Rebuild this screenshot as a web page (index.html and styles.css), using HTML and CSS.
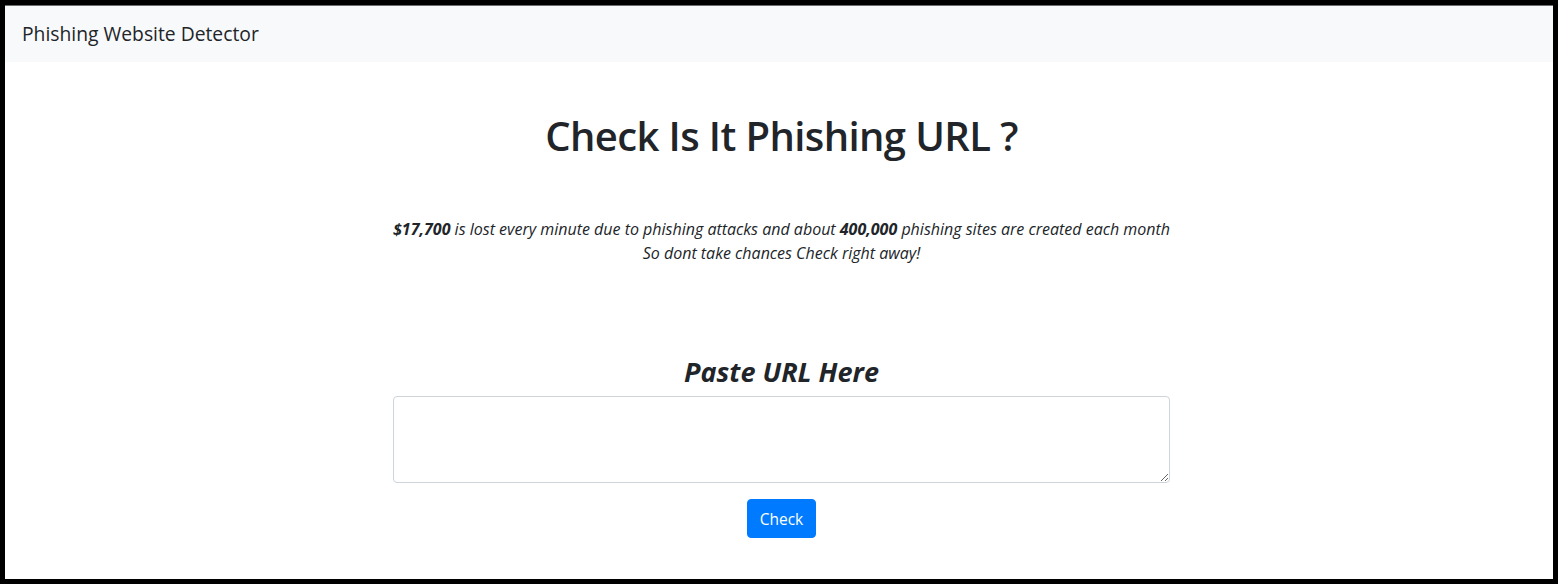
FILE: index.html
```html
<!DOCTYPE html>
<html lang="en">
<head>
<meta charset="utf-8">
<title>Phishing Website Detector</title>
<link rel="stylesheet" href="styles.css">
</head>
<body>
<div class="frame">
  <nav class="navbar">
    <span class="brand">Phishing Website Detector</span>
  </nav>
  <main class="main">
    <h1 class="title">Check Is It Phishing URL ?</h1>
    <p class="lead"><b>$17,700</b> is lost every minute due to phishing attacks and about <b>400,000</b> phishing sites are created each month<br>So dont take chances Check right away!</p>
    <form class="form">
      <h3 class="label">Paste URL Here</h3>
      <textarea class="url"></textarea>
      <button type="button" class="btn">Check</button>
    </form>
  </main>
</div>
</body>
</html>
```
FILE: styles.css
```css
html, body {
  margin: 0;
  padding: 0;
  height: 100%;
}
body {
  font-family: "Open Sans", "Noto Sans", sans-serif;
  color: #212529;
  background: #fff;
}
.frame {
  box-sizing: border-box;
  height: 100%;
  border: 5px solid #000;
  overflow: hidden;
  background: #fff;
}
.navbar {
  box-sizing: border-box;
  height: 57px;
  background: #f8f9fa;
  border-top: 1px solid #6c6c6c;
  padding: 0 17px;
  display: flex;
  align-items: center;
}
.brand {
  font-size: 19.3px;
  line-height: 30px;
  color: #212529;
}
.main {
  display: flex;
  flex-direction: column;
  align-items: center;
  padding-left: 5px;
}
.title {
  margin: 50px 0 0;
  font-size: 40px;
  font-weight: 600;
  letter-spacing: -0.6px;
  line-height: 48px;
}
.lead {
  margin: 57px 0 0;
  font-size: 16px;
  line-height: 24px;
  font-style: italic;
  text-align: center;
}
.lead b {
  font-weight: 700;
}
.form {
  width: 777px;
  margin-top: 90px;
  display: flex;
  flex-direction: column;
  align-items: center;
}
.label {
  margin: 0 0 7px;
  font-size: 27px;
  line-height: 34px;
  font-style: italic;
  font-weight: 700;
}
.url {
  box-sizing: border-box;
  width: 777px;
  height: 87px;
  border: 1px solid #ced4da;
  border-radius: 4px;
  padding: 6px 12px;
  font: inherit;
  resize: vertical;
}
.btn {
  margin-top: 16px;
  height: 39px;
  padding: 6px 12px;
  background: #007bff;
  border: 1px solid #007bff;
  border-radius: 4px;
  color: #fff;
  font-family: inherit;
  font-size: 15.5px;
  line-height: 24px;
}
```
